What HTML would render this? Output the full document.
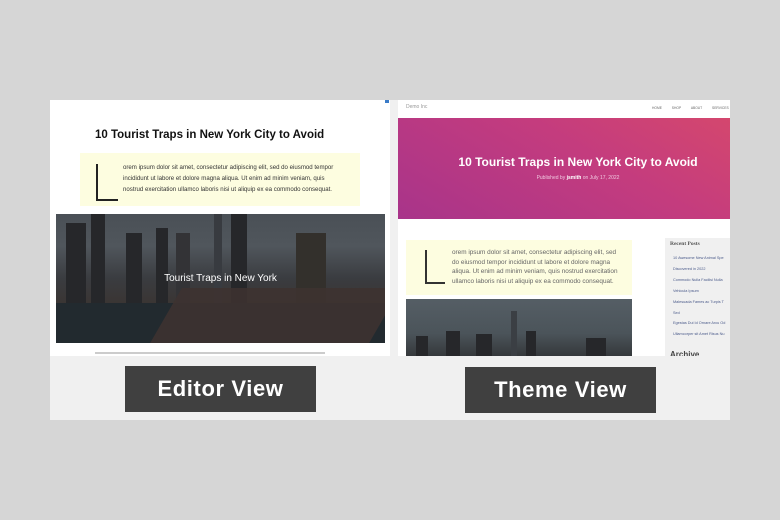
<!DOCTYPE html>
<html><head><style>
*{margin:0;padding:0;box-sizing:border-box}
body{width:780px;height:520px;background:#d6d6d6;position:relative;overflow:hidden;font-family:"Liberation Sans",sans-serif}
.a{position:absolute}
.city{background:
linear-gradient(180deg,#4a5056 0%,#50565c 25%,#3a3c40 50%,#3a3330 75%,#22282d 100%);}
.bld{position:absolute;bottom:0;background:#26272a}
.lbl{background:#404040;color:#fff;font-weight:bold;font-size:22px;letter-spacing:.6px;display:flex;align-items:center;justify-content:center}
.tiny{font-size:6.1px;line-height:11px;color:#333}
</style></head><body>
<div class="a" style="left:50px;top:100px;width:680px;height:320px;background:#f0f0f0"></div>
<!-- editor -->
<div class="a" style="left:50px;top:100px;width:340px;height:256px;background:#fff"></div>
<div class="a" style="left:385px;top:100px;width:4px;height:3px;background:#3a7bc8"></div>
<div class="a" style="left:95px;top:129px;font-size:11.5px;font-weight:bold;color:#111">10 Tourist Traps in New York City to Avoid</div>
<div class="a" style="left:80px;top:153px;width:280px;height:53px;background:#fdfde0"></div>
<div class="a" style="left:96px;top:164px;width:2px;height:37px;background:#222"></div>
<div class="a" style="left:96px;top:199px;width:22px;height:2px;background:#222"></div>
<div class="a tiny" style="left:123px;top:162px;width:222px">orem ipsum dolor sit amet, consectetur adipiscing elit, sed do eiusmod tempor incididunt ut labore et dolore magna aliqua. Ut enim ad minim veniam, quis nostrud exercitation ullamco laboris nisi ut aliquip ex ea commodo consequat.</div>
<div class="a city" style="left:56px;top:214px;width:329px;height:129px;overflow:hidden">
<div class="bld" style="left:10px;width:20px;height:80px;bottom:40px"></div>
<div class="bld" style="left:35px;width:14px;height:90px;bottom:40px"></div>
<div class="bld" style="left:70px;width:16px;height:70px;bottom:40px"></div>
<div class="bld" style="left:100px;width:12px;height:75px;bottom:40px"></div>
<div class="bld" style="left:120px;width:14px;height:70px;bottom:40px;background:#333336"></div>
<div class="bld" style="left:158px;width:8px;height:125px;bottom:40px;background:#383b40"></div>
<div class="bld" style="left:175px;width:16px;height:90px;bottom:40px"></div>
<div class="bld" style="left:240px;width:30px;height:70px;bottom:40px;background:#33302c"></div>
<div class="bld" style="left:0;width:329px;height:40px;background:#222a2f"></div>
<div class="bld" style="left:110px;width:219px;height:55px;background:#3e3230;bottom:0;transform:skewX(-30deg);opacity:.85"></div>
<div class="a" style="left:0;top:59px;width:329px;text-align:center;color:#fff;font-size:10px">Tourist Traps in New York</div>
</div>
<div class="a" style="left:95px;top:352px;width:230px;height:2px;background:#ccc"></div>
<div class="a lbl" style="left:125px;top:366px;width:191px;height:46px">Editor View</div>
<!-- theme -->
<div class="a" style="left:398px;top:100px;width:332px;height:256px;background:#fff"></div>
<div class="a" style="left:406px;top:104px;font-size:5px;color:#999">Demo Inc</div>
<div class="a" style="left:652px;top:106px;font-size:3.3px;color:#666;word-spacing:9px;white-space:nowrap">HOME SHOP ABOUT SERVICES</div>
<div class="a" style="left:398px;top:118px;width:332px;height:101px;background:linear-gradient(30deg,#a8348a,#c43c7e 60%,#d4476e)"></div>
<div class="a" style="left:398px;top:155px;width:360px;text-align:center;color:#fff;font-weight:bold;font-size:12px">10 Tourist Traps in New York City to Avoid</div>
<div class="a" style="left:398px;top:175px;width:360px;text-align:center;color:#f0c8e0;font-size:5px">Published by <b style="color:#fff">jsmith</b> on July 17, 2022</div>
<div class="a" style="left:406px;top:240px;width:226px;height:55px;background:#fdfde0"></div>
<div class="a" style="left:425px;top:250px;width:2px;height:34px;background:#333"></div>
<div class="a" style="left:425px;top:282px;width:20px;height:2px;background:#333"></div>
<div class="a tiny" style="left:452px;top:248px;width:172px;color:#666;font-size:6.4px;line-height:9.6px">orem ipsum dolor sit amet, consectetur adipiscing elit, sed do eiusmod tempor incididunt ut labore et dolore magna aliqua. Ut enim ad minim veniam, quis nostrud exercitation ullamco laboris nisi ut aliquip ex ea commodo consequat.</div>
<div class="a city" style="left:406px;top:299px;width:226px;height:57px;overflow:hidden;background:linear-gradient(180deg,#555e65,#4b545a 60%,#35383b)">
<div class="bld" style="left:10px;width:12px;height:20px"></div>
<div class="bld" style="left:40px;width:14px;height:25px"></div>
<div class="bld" style="left:70px;width:16px;height:22px"></div>
<div class="bld" style="left:105px;width:6px;height:45px;background:#3b3f44"></div>
<div class="bld" style="left:120px;width:10px;height:25px"></div>
<div class="bld" style="left:180px;width:20px;height:18px"></div>
</div>
<div class="a" style="left:665px;top:238px;width:65px;height:118px;background:#f0f0f0"></div>
<div class="a" style="left:670px;top:241px;font-size:5.5px;font-weight:bold;color:#555;font-family:'Liberation Serif',serif">Recent Posts</div>
<div class="a" style="left:673px;top:253px;font-size:3.8px;line-height:10.9px;color:#4a5a8a;white-space:nowrap;width:57px;overflow:hidden">10 Awesome New Animal Spe<br>Discovered in 2022<br>Commodo Nulla Facilisi Nulla<br>Vehicula Ipsum<br>Malesuada Fames ac Turpis T<br>Sed<br>Egestas Dui Id Ornare Arcu Od<br>Ullamcorper sit Amet Risus Nu</div>
<div class="a" style="left:670px;top:350px;font-size:8px;font-weight:bold;color:#444;height:6px;overflow:hidden">Archive</div>
<div class="a lbl" style="left:465px;top:367px;width:191px;height:46px">Theme View</div>
</body></html>
